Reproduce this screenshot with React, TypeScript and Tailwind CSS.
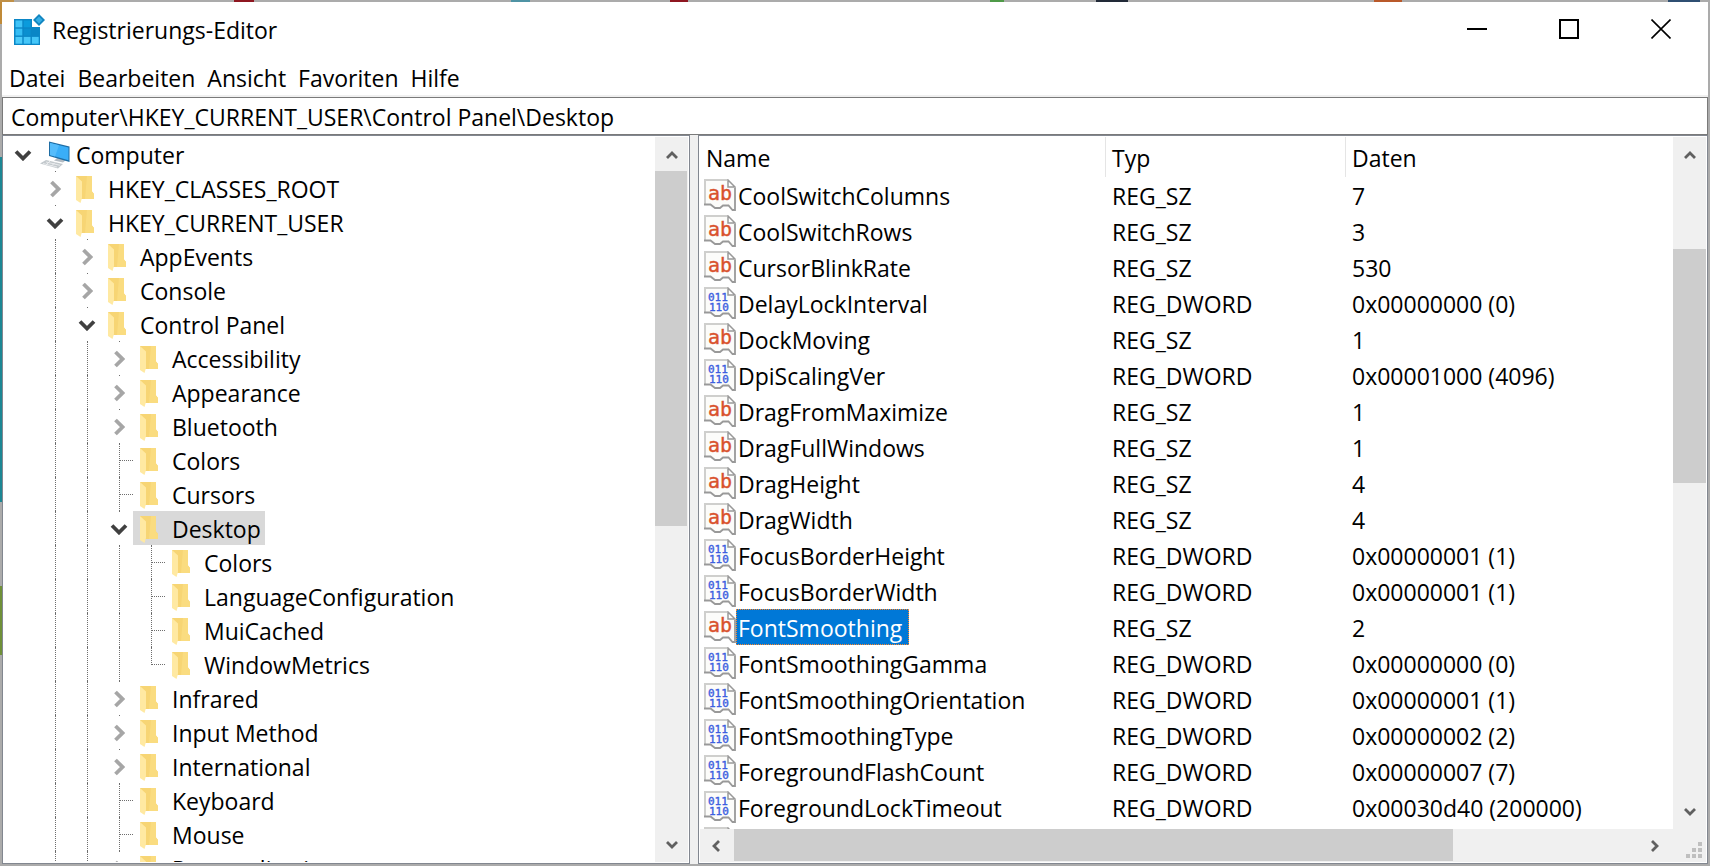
import { useState } from 'react'
import clsx from 'clsx'

type Toggle = 'open' | 'closed' | 'none'

interface TreeNode {
  name: string
  level: number
  toggle: Toggle
  /** Last child of its parent, the guide line stops half way */
  last?: boolean
}

interface RegValue {
  name: string
  type: 'REG_SZ' | 'REG_DWORD'
  data: string
}

const MENU = ['Datei', 'Bearbeiten', 'Ansicht', 'Favoriten', 'Hilfe']

const TREE: TreeNode[] = [
  { name: 'Computer', level: 0, toggle: 'open' },
  { name: 'HKEY_CLASSES_ROOT', level: 1, toggle: 'closed' },
  { name: 'HKEY_CURRENT_USER', level: 1, toggle: 'open' },
  { name: 'AppEvents', level: 2, toggle: 'closed' },
  { name: 'Console', level: 2, toggle: 'closed' },
  { name: 'Control Panel', level: 2, toggle: 'open' },
  { name: 'Accessibility', level: 3, toggle: 'closed' },
  { name: 'Appearance', level: 3, toggle: 'closed' },
  { name: 'Bluetooth', level: 3, toggle: 'closed' },
  { name: 'Colors', level: 3, toggle: 'none' },
  { name: 'Cursors', level: 3, toggle: 'none' },
  { name: 'Desktop', level: 3, toggle: 'open' },
  { name: 'Colors', level: 4, toggle: 'none' },
  { name: 'LanguageConfiguration', level: 4, toggle: 'none' },
  { name: 'MuiCached', level: 4, toggle: 'none' },
  { name: 'WindowMetrics', level: 4, toggle: 'none', last: true },
  { name: 'Infrared', level: 3, toggle: 'closed' },
  { name: 'Input Method', level: 3, toggle: 'closed' },
  { name: 'International', level: 3, toggle: 'closed' },
  { name: 'Keyboard', level: 3, toggle: 'none' },
  { name: 'Mouse', level: 3, toggle: 'none' },
  { name: 'Personalization', level: 3, toggle: 'closed' },
]

const VALUES: RegValue[] = [
  { name: 'CoolSwitchColumns', type: 'REG_SZ', data: '7' },
  { name: 'CoolSwitchRows', type: 'REG_SZ', data: '3' },
  { name: 'CursorBlinkRate', type: 'REG_SZ', data: '530' },
  { name: 'DelayLockInterval', type: 'REG_DWORD', data: '0x00000000 (0)' },
  { name: 'DockMoving', type: 'REG_SZ', data: '1' },
  { name: 'DpiScalingVer', type: 'REG_DWORD', data: '0x00001000 (4096)' },
  { name: 'DragFromMaximize', type: 'REG_SZ', data: '1' },
  { name: 'DragFullWindows', type: 'REG_SZ', data: '1' },
  { name: 'DragHeight', type: 'REG_SZ', data: '4' },
  { name: 'DragWidth', type: 'REG_SZ', data: '4' },
  { name: 'FocusBorderHeight', type: 'REG_DWORD', data: '0x00000001 (1)' },
  { name: 'FocusBorderWidth', type: 'REG_DWORD', data: '0x00000001 (1)' },
  { name: 'FontSmoothing', type: 'REG_SZ', data: '2' },
  { name: 'FontSmoothingGamma', type: 'REG_DWORD', data: '0x00000000 (0)' },
  { name: 'FontSmoothingOrientation', type: 'REG_DWORD', data: '0x00000001 (1)' },
  { name: 'FontSmoothingType', type: 'REG_DWORD', data: '0x00000002 (2)' },
  { name: 'ForegroundFlashCount', type: 'REG_DWORD', data: '0x00000007 (7)' },
  { name: 'ForegroundLockTimeout', type: 'REG_DWORD', data: '0x00030d40 (200000)' },
]

function RegeditIcon() {
  const cells = [
    [0, 0, '#3fc3f7'], [1, 0, '#0b9bdc'],
    [0, 1, '#35bdf4'], [1, 1, '#0a8fd0'], [2, 1, '#0a86c6'],
    [0, 2, '#4ccbfa'], [1, 2, '#45c6f8'], [2, 2, '#45c6f8'],
  ] as const
  return (
    <svg width="32" height="32" viewBox="0 0 32 32" aria-hidden="true">
      <path d="M0 5h18v8h8v18H0z" fill="#0b86c6" />
      {cells.map(([cx, cy, fill]) => (
        <rect key={`${cx}${cy}`} x={1.5 + cx * 8.2} y={6.5 + cy * 8.2} width="6.8" height="6.8" fill={fill} />
      ))}
      <path d="M25 0l6 6-6 6-6-6z" fill="#1185c0" />
      <path d="M25 2.500l3.500 3.500-3.500 3.500-3.500-3.500z" fill="#35aee4" />
    </svg>
  )
}

function ComputerIcon() {
  return (
    <svg width="30" height="28" viewBox="0 0 30 28" aria-hidden="true">
      <path d="M14 19.500l4-3 8 2.500-3 2.500z" fill="#b4bcc3" />
      <path d="M9 0.500l20.500 5v15.500L9 15z" fill="#1f6da4" />
      <path d="M10 2l18.500 4.500v12.800L10 14z" fill="#3aaef8" />
      <path d="M10 2l9 2.200-4 11.200-5-1.400z" fill="#55bcfb" />
      <path d="M0 22.500l6-3.500 17 4-5 4.500z" fill="#c3c9cd" />
      <path d="M3 22.500l14 3.500M6 21l14 3.300M6 24l4-4M11 25.500l4-4" stroke="#f1f3f4" strokeWidth="0.8" />
    </svg>
  )
}

function FolderIcon() {
  return (
    <svg width="19" height="27" viewBox="0 0 19 27" className="shrink-0" aria-hidden="true">
      <path d="M0 0h16v15.500l2 2.500v5H5L0 20z" fill="#f7d574" />
      <path d="M11 0h5v15.500l2 2.500v5h-9z" fill="#fadc80" />
      <path d="M0 0l6 5.500V22l-1.500 5L0 24z" fill="#ffe9a2" />
    </svg>
  )
}

function ValueIcon({ type }: { type?: RegValue['type'] }) {
  return (
    <svg width="32" height="32" viewBox="0 0 32 32" className="shrink-0" aria-hidden="true">
      <path d="M1 1h23l7 8v22h-3l-3-5h-6l-2 3h-6l-5-4H1z" fill="#fcfcfa" />
      <path d="M1 25V1h22" fill="none" stroke="#cfcfcd" strokeWidth="2" />
      <path d="M24 1v7h7z" fill="#fff" stroke="#999" strokeWidth="1.500" />
      <path d="M31 9v22h-2.500l-4-4.500H19L16 29h-5l-4.500-3.500H0" fill="none" stroke="#999" strokeWidth="1.800" />
      {type === 'REG_SZ' && (
        <text x="4" y="21" fill="#d9512c" stroke="#d9512c" strokeWidth="0.4" className="font-['DejaVu_Sans_Mono'] text-[20px]">
          ab
        </text>
      )}
      {type === 'REG_DWORD' && (
        <g fill="#3d5fe0" stroke="#3d5fe0" strokeWidth="0.4" className="font-['DejaVu_Sans_Mono'] text-[11px]">
          <text x="4" y="14">011</text>
          <text x="5" y="24">110</text>
        </g>
      )}
    </svg>
  )
}

/** Thick arrow used in front of tree items */
function TreeChevron({ open }: { open: boolean }) {
  return open ? (
    <svg width="18" height="12" viewBox="0 0 18 12" aria-hidden="true">
      <path d="M2 2.500l7 7 7-7" fill="none" stroke="#404040" strokeWidth="3.800" />
    </svg>
  ) : (
    <svg width="12" height="18" viewBox="0 0 12 18" aria-hidden="true">
      <path d="M2.500 2l7 7-7 7" fill="none" stroke="#a6a6a6" strokeWidth="3.800" />
    </svg>
  )
}

const ARROWS = {
  up: 'M1 10l5-5 5 5',
  down: 'M1 3l5 5 5-5',
  left: 'M8 1L3 6l5 5',
  right: 'M2 1l5 5-5 5',
}

function ScrollButton({ dir, label }: { dir: keyof typeof ARROWS; label: string }) {
  return (
    <button type="button" aria-label={label} className="flex size-[34px] shrink-0 items-center justify-center">
      <svg width="12" height="12" viewBox="0 0 12 12" aria-hidden="true">
        <path d={ARROWS[dir]} fill="none" stroke="#606060" strokeWidth="2.800" />
      </svg>
    </button>
  )
}

/** Empty columns with the dotted guides in front of a tree item */
function Guides({ node }: { node: TreeNode }) {
  if (node.level === 0) return null
  return (
    <>
      <span className="w-8 shrink-0" />
      {Array.from({ length: node.level - 1 }, (_, i) => (
        <span key={i} className="flex w-8 shrink-0 pl-[18px]">
          <span className="border-l border-dotted border-[#6e6e6e]" />
        </span>
      ))}
    </>
  )
}

function TreeRow({ node, selected, onSelect }: { node: TreeNode; selected: boolean; onSelect: () => void }) {
  return (
    <li className="flex h-[34px]">
      <Guides node={node} />
      {node.toggle === 'none' ? (
        <span className="flex w-8 shrink-0 pl-[18px]">
          <span className={clsx('border-l border-dotted border-[#6e6e6e]', node.last && 'h-[18px]')} />
          <span className="h-[18px] w-3.5 border-b border-dotted border-[#6e6e6e]" />
        </span>
      ) : (
        <span className="flex w-8 shrink-0 flex-col pl-1">
          <span className={clsx('ml-3.5 size-px', node.level > 0 && 'bg-[#6e6e6e]')} />
          <button
            type="button"
            aria-label={`${node.name} ${node.toggle === 'open' ? 'reduzieren' : 'erweitern'}`}
            className="flex flex-1 items-center justify-center"
          >
            <TreeChevron open={node.toggle === 'open'} />
          </button>
        </span>
      )}
      <button
        type="button"
        onClick={onSelect}
        className={clsx(
          'flex items-center whitespace-nowrap pt-0.5 pr-1',
          node.level === 0 ? 'pl-[3px]' : 'pl-[7px]',
          selected && 'bg-[#d9d9d9]',
        )}
      >
        <span className="flex w-8 shrink-0">
          {node.level === 0 ? <ComputerIcon /> : <FolderIcon />}
        </span>
        <span className={clsx(node.level === 0 && 'pl-1')}>{node.name}</span>
      </button>
    </li>
  )
}

function TitleBar() {
  return (
    <header className="flex h-14 shrink-0 items-center pl-3">
      <RegeditIcon />
      <h1 className="flex-1 pl-1.5">Registrierungs-Editor</h1>
      <div className="flex h-full pr-px pb-0.5">
        <button type="button" aria-label="Minimieren" className="flex w-[92px] items-center justify-center">
          <svg width="20" height="20" viewBox="0 0 20 20" aria-hidden="true">
            <path d="M0 10h20" stroke="#000" strokeWidth="2" />
          </svg>
        </button>
        <button type="button" aria-label="Maximieren" className="flex w-[92px] items-center justify-center">
          <svg width="20" height="20" viewBox="0 0 20 20" aria-hidden="true">
            <path d="M1 1h18v18H1z" fill="none" stroke="#000" strokeWidth="2" />
          </svg>
        </button>
        <button type="button" aria-label="Schließen" className="flex w-[92px] items-center justify-center">
          <svg width="20" height="20" viewBox="0 0 20 20" aria-hidden="true">
            <path d="M0.500 0.500l19 19M19.500 0.500l-19 19" stroke="#000" strokeWidth="1.600" />
          </svg>
        </button>
      </div>
    </header>
  )
}

function TreePane() {
  const [selected, setSelected] = useState(11)

  return (
    <nav className="flex w-[688px] shrink-0 border border-[#828790] p-px">
      <ul className="min-w-0 flex-1 overflow-hidden pl-px">
        {TREE.map((node, i) => (
          <TreeRow key={i} node={node} selected={i === selected} onSelect={() => setSelected(i)} />
        ))}
      </ul>
      <div className="flex w-[33px] shrink-0 flex-col items-center bg-[#f0f0f0]">
        <ScrollButton dir="up" label="Nach oben" />
        <div className="w-full flex-1 pr-px">
          <div className="h-[54%] bg-[#cdcdcd]" />
        </div>
        <ScrollButton dir="down" label="Nach unten" />
      </div>
    </nav>
  )
}

function ValuePane() {
  const [selected, setSelected] = useState('FontSmoothing')

  return (
    <main className="flex min-w-0 flex-1 flex-col border border-[#828790] p-px">
      <div className="flex min-h-0 flex-1">
        <div className="min-w-0 flex-1 overflow-hidden">
          <table className="w-full table-fixed border-separate border-spacing-0 text-left whitespace-nowrap">
            <thead>
              <tr className="h-10">
                <th className="w-[406px] border-r border-[#e5e5e5] pt-0.5 pl-1.5 font-normal">Name</th>
                <th className="w-[240px] border-r border-[#e5e5e5] pt-0.5 pl-1.5 font-normal">Typ</th>
                <th className="pt-0.5 pl-1.5 font-normal">Daten</th>
              </tr>
            </thead>
            <tbody>
              {VALUES.map(v => (
                <tr key={v.name} className="h-9">
                  <td className="p-0 pl-1">
                    <button type="button" onClick={() => setSelected(v.name)} className="flex h-9 items-center">
                      <ValueIcon type={v.type} />
                      <span
                        className={clsx(
                          'flex h-9 items-center border border-dotted pt-0.5 pr-1.5 pl-px',
                          v.name === selected ? 'border-[#ff8728] bg-[#0078d7] text-white' : 'border-transparent',
                        )}
                      >
                        {v.name}
                      </span>
                    </button>
                  </td>
                  <td className="p-0 pt-0.5 pl-1.5">{v.type}</td>
                  <td className="p-0 pt-0.5 pl-1.5">{v.data}</td>
                </tr>
              ))}
              {/* next value, only its top edge is in view */}
              <tr className="h-9">
                <td className="p-0 pl-1">
                  <ValueIcon />
                </td>
              </tr>
            </tbody>
          </table>
        </div>
        <div className="flex w-[33px] shrink-0 flex-col items-center bg-[#f0f0f0]">
          <ScrollButton dir="up" label="Nach oben" />
          <div className="w-full flex-1">
            <div className="h-[12.5%]" />
            <div className="h-[37.5%] bg-[#cdcdcd]" />
          </div>
          <ScrollButton dir="down" label="Nach unten" />
        </div>
      </div>
      <div className="flex h-[33px] shrink-0 items-center bg-[#f0f0f0]">
        <ScrollButton dir="left" label="Nach links" />
        <div className="h-full flex-1 pb-px">
          <div className="h-full w-[79.4%] bg-[#cdcdcd]" />
        </div>
        <ScrollButton dir="right" label="Nach rechts" />
        <div className="flex w-[33px] items-end justify-end self-stretch pr-1 pb-1">
          <svg width="16" height="16" viewBox="0 0 16 16" fill="#bfbfbf" aria-hidden="true">
            <path d="M12 0h4v4h-4zM6 6h4v4H6zM12 6h4v4h-4zM0 12h4v4H0zM6 12h4v4H6zM12 12h4v4h-4z" />
          </svg>
        </div>
      </div>
    </main>
  )
}

/** Slivers of the desktop that show around the window */
function DesktopTop() {
  return (
    <div className="h-0.5 shrink-0 bg-[linear-gradient(90deg,#c09048_0_14px,#ababab_14px_234px,#8e1620_234px_254px,#ababab_254px_511px,#4f93a4_511px_530px,#ababab_530px_670px,#8e1620_670px_688px,#ababab_688px_990px,#4f9a48_990px_1004px,#ababab_1004px_1096px,#222a38_1096px_1128px,#ababab_1128px_1374px,#b9592a_1374px_1402px,#ababab_1402px_1668px,#2f4f72_1668px_1700px,#ababab_1700px)]" />
  )
}

function DesktopLeft() {
  return (
    <div className="w-0.5 shrink-0 bg-[linear-gradient(180deg,#c08a38_0_22px,#ababab_22px_155px,#1c8794_155px_500px,#ababab_500px_584px,#6f9038_584px_653px,#ababab_653px)]" />
  )
}

export default function App() {
  const [path, setPath] = useState('Computer\\HKEY_CURRENT_USER\\Control Panel\\Desktop')

  return (
    <div className="flex h-screen flex-col overflow-hidden bg-[#ababab] pb-0.5 font-['Open_Sans','Noto_Sans',sans-serif] text-[23px] leading-[30px] text-black">
      <DesktopTop />
      <div className="flex min-h-0 flex-1 pr-0.5">
        <DesktopLeft />
        <div className="flex min-w-0 flex-1 flex-col bg-white">
          <TitleBar />
          <div role="menubar" className="flex h-[37px] shrink-0 items-center gap-3 pt-0.5 pl-[7px]">
            {MENU.map(item => (
              <button key={item} type="button" role="menuitem">
                {item}
              </button>
            ))}
          </div>
          <div className="bg-[#f0f0f0] pt-0.5">
            <input
              type="text"
              aria-label="Adresse"
              value={path}
              onChange={e => setPath(e.target.value)}
              className="block h-[38px] w-full border border-[#7a7a7a] bg-white px-2 pt-0.5 outline-none"
            />
          </div>
          <div className="flex min-h-0 flex-1 bg-[#f0f0f0] *:bg-white">
            <TreePane />
            <div className="w-2 shrink-0 !bg-[#f0f0f0]" />
            <ValuePane />
          </div>
        </div>
      </div>
    </div>
  )
}
